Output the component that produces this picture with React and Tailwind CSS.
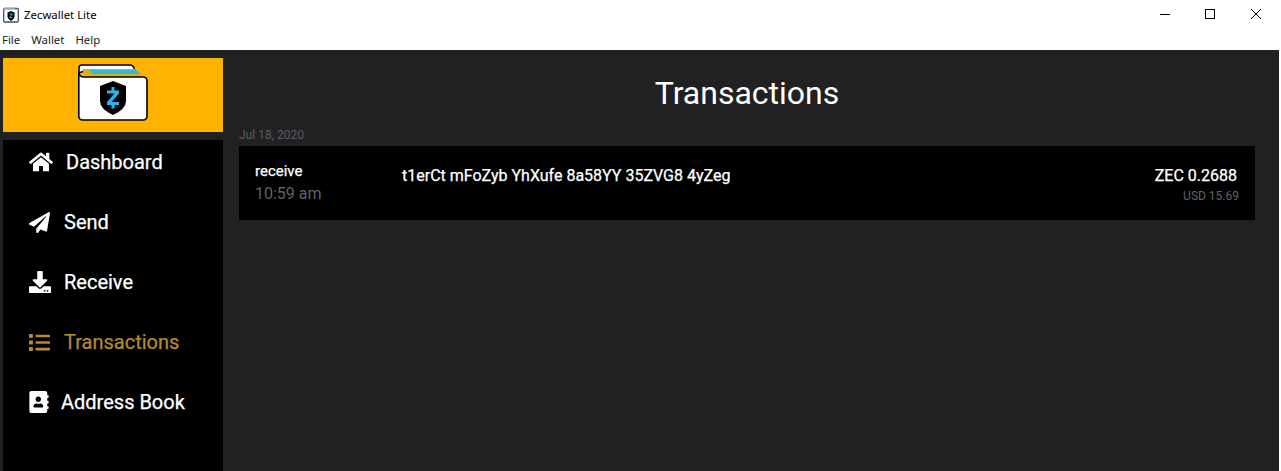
import React from "react";
import { FaHome, FaPaperPlane, FaDownload, FaList, FaAddressBook } from "react-icons/fa";

const nav = [
  { label: "Dashboard", Icon: FaHome, icon: "w-[24px] h-[22px]", gap: "ml-[13px]", top: "mt-[9px]" },
  { label: "Send", Icon: FaPaperPlane, icon: "w-[21px] h-[21px]", gap: "ml-[14px]", top: "mt-[34px]" },
  { label: "Receive", Icon: FaDownload, icon: "w-[22px] h-[22px]", gap: "ml-[13px]", top: "mt-[34px]" },
  { label: "Transactions", Icon: FaList, icon: "w-[21px] h-[21px]", gap: "ml-[14px]", top: "mt-[34px]", active: true },
  { label: "Address Book", Icon: FaAddressBook, icon: "w-[20px] h-[22px]", gap: "ml-[12px]", top: "mt-[34px]" },
];

function Logo() {
  return (
    <svg width="74" height="60" viewBox="0 0 74 60" fill="none">
      <path d="M3 10 V5 Q3 2 6 2 H54 Q57 2 58 5 L59 8 H8 Z" fill="#fff" stroke="#000" strokeWidth="1.5" />
      <path d="M7 6 H59 L66 13 H12 Q8 13 7 10 Z" fill="#d6b022" />
      <path d="M12 7 H60 L65 11 H18 Z" fill="#38b8d8" />
      <path d="M2.8 9 V53 Q2.8 57 7 57 H67 Q71 57 71 53 V18 Q71 14 67 14 H8 Q3 14 2.8 9Z" fill="#fff" stroke="#000" strokeWidth="1.6" />
      <path d="M37 18 L50 23 V38 Q50 46 37 52 Q24 46 24 38 V23 Z" fill="#000" />
      <path d="M31 27.5 H43 V30.5 L35.5 39 H43 V42 H31 V39 L38.5 30.5 H31 Z M35.5 24 H38.5 V28 H35.5 Z M35.5 41 H38.5 V45.5 H35.5 Z" fill="#2cb4ea" />
    </svg>
  );
}

export default function App() {
  return (
    <div className="w-[1281px] h-[471px] overflow-hidden bg-white flex flex-col font-['Roboto',sans-serif] pr-[2px]">
      <div className="h-[30px] flex items-center bg-white shrink-0">
        <svg className="ml-[3px]" width="16" height="16" viewBox="0 0 16 16">
          <rect x="0.7" y="1.5" width="14.6" height="13.5" rx="1" fill="#fff" stroke="#42525e" strokeWidth="1.3" />
          <path d="M1 1.5 H12" stroke="#93a8b4" strokeWidth="1.6" />
          <path d="M8 4 L11.5 5.5 V10 Q11 12.5 8 14 Q5 12.5 4.5 10 V5.5 Z" fill="#0b0b0b" />
          <path d="M6.6 7 H9.4 L6.6 10.6 H9.4" stroke="#38b6e8" strokeWidth="1" fill="none" />
        </svg>
        <span className="ml-[5px] text-[11.4px] text-black font-['Noto_Sans',sans-serif]">Zecwallet Lite</span>
        <div className="ml-auto flex items-center pb-[2px]">
          <svg width="12" height="12" viewBox="0 0 12 12" className="mr-[33px]"><path d="M1 6.5 H11" stroke="#000" strokeWidth="1" /></svg>
          <svg width="12" height="12" viewBox="0 0 12 12" className="mr-[34px]"><rect x="1.5" y="1.5" width="9" height="9" fill="none" stroke="#000" strokeWidth="1" /></svg>
          <svg width="12" height="12" viewBox="0 0 12 12" className="mr-[17px]"><path d="M1 1 L11 11 M11 1 L1 11" stroke="#000" strokeWidth="1" /></svg>
        </div>
      </div>
      <div className="h-[20px] flex items-center pl-[2px] text-[11.4px] text-[#222] bg-white shrink-0 font-['Noto_Sans',sans-serif]">
        <span>File</span>
        <span className="ml-[11px]">Wallet</span>
        <span className="ml-[11px]">Help</span>
      </div>
      <div className="flex-1 min-h-0 bg-[#212124] flex pl-[3px]">
        <aside className="w-[220px] shrink-0 flex flex-col pt-[8px]">
          <div className="h-[74px] bg-[#ffb300] flex items-center justify-center shrink-0 pb-[4px]">
            <Logo />
          </div>
          <nav className="flex-1 mt-[8px] bg-black pl-[26px] flex flex-col">
            {nav.map(({ label, Icon, icon, gap, top, active }) => (
              <div key={label} className={`h-[26px] flex items-center ${top} ${active ? "text-[#b58b2c]" : "text-white"}`}>
                <Icon className={`${icon} shrink-0`} />
                <span className={`${gap} text-[20px] leading-[26px] font-normal [-webkit-text-stroke:0.25px]`}>{label}</span>
              </div>
            ))}
          </nav>
        </aside>
        <main className="flex-1 min-w-0 flex flex-col pl-[16px] pr-[24px]">
          <h1 className="h-[76px] flex items-center justify-center text-[32px] text-white font-normal pt-[9px]">Transactions</h1>
          <div className="h-[20px] flex items-center text-[12px] text-[#5c5c60] pb-[2px]">Jul 18, 2020</div>
          <div className="h-[74px] bg-black flex pl-[16px] pr-[16px]">
            <div className="w-[147px] shrink-0 pt-[15px]">
              <div className="text-[15px] leading-[20px] text-white font-normal [-webkit-text-stroke:0.25px]">receive</div>
              <div className="text-[16px] leading-[20px] text-[#636363] mt-[3px]">10:59 am</div>
            </div>
            <div className="flex-1 pt-[20px] text-[16px] leading-[20px] text-white font-normal [-webkit-text-stroke:0.25px]">t1erCt mFoZyb YhXufe 8a58YY 35ZVG8 4yZeg</div>
            <div className="flex flex-col items-end pt-[20px]">
              <div className="text-[16px] leading-[20px] text-white font-normal pr-[2px] [-webkit-text-stroke:0.25px]">ZEC 0.2688</div>
              <div className="text-[12px] leading-[16px] text-[#636363] mt-[2px]">USD 15.69</div>
            </div>
          </div>
        </main>
      </div>
    </div>
  );
}
